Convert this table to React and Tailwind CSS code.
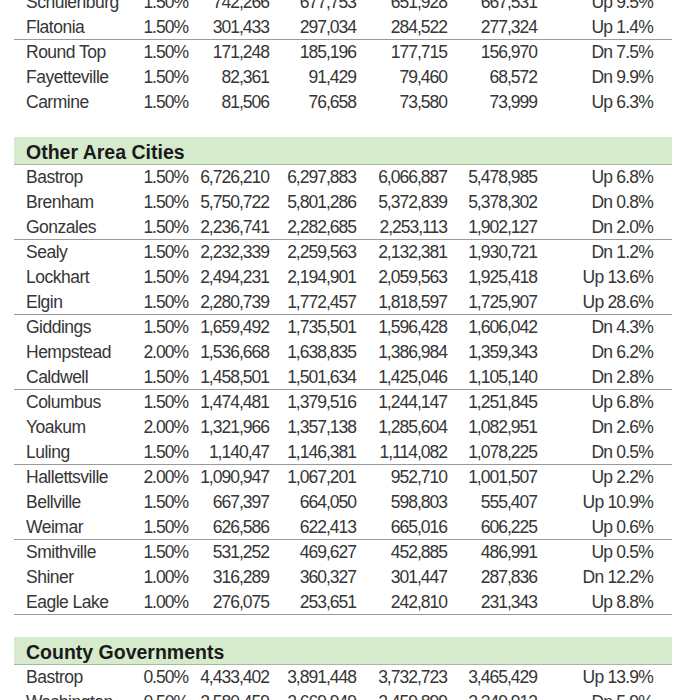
const topRows = [
  ['Schulenburg', '1.50%', '742,266', '677,753', '651,928', '667,531', 'Up 9.5%'],
  ['Flatonia', '1.50%', '301,433', '297,034', '284,522', '277,324', 'Up 1.4%', true],
  ['Round Top', '1.50%', '171,248', '185,196', '177,715', '156,970', 'Dn 7.5%'],
  ['Fayetteville', '1.50%', '82,361', '91,429', '79,460', '68,572', 'Dn 9.9%'],
  ['Carmine', '1.50%', '81,506', '76,658', '73,580', '73,999', 'Up 6.3%'],
];

const areaCities = [
  ['Bastrop', '1.50%', '6,726,210', '6,297,883', '6,066,887', '5,478,985', 'Up 6.8%'],
  ['Brenham', '1.50%', '5,750,722', '5,801,286', '5,372,839', '5,378,302', 'Dn 0.8%'],
  ['Gonzales', '1.50%', '2,236,741', '2,282,685', '2,253,113', '1,902,127', 'Dn 2.0%', true],
  ['Sealy', '1.50%', '2,232,339', '2,259,563', '2,132,381', '1,930,721', 'Dn 1.2%'],
  ['Lockhart', '1.50%', '2,494,231', '2,194,901', '2,059,563', '1,925,418', 'Up 13.6%'],
  ['Elgin', '1.50%', '2,280,739', '1,772,457', '1,818,597', '1,725,907', 'Up 28.6%', true],
  ['Giddings', '1.50%', '1,659,492', '1,735,501', '1,596,428', '1,606,042', 'Dn 4.3%'],
  ['Hempstead', '2.00%', '1,536,668', '1,638,835', '1,386,984', '1,359,343', 'Dn 6.2%'],
  ['Caldwell', '1.50%', '1,458,501', '1,501,634', '1,425,046', '1,105,140', 'Dn 2.8%', true],
  ['Columbus', '1.50%', '1,474,481', '1,379,516', '1,244,147', '1,251,845', 'Up 6.8%'],
  ['Yoakum', '2.00%', '1,321,966', '1,357,138', '1,285,604', '1,082,951', 'Dn 2.6%'],
  ['Luling', '1.50%', '1,140,47', '1,146,381', '1,114,082', '1,078,225', 'Dn 0.5%', true],
  ['Hallettsville', '2.00%', '1,090,947', '1,067,201', '952,710', '1,001,507', 'Up 2.2%'],
  ['Bellville', '1.50%', '667,397', '664,050', '598,803', '555,407', 'Up 10.9%'],
  ['Weimar', '1.50%', '626,586', '622,413', '665,016', '606,225', 'Up 0.6%', true],
  ['Smithville', '1.50%', '531,252', '469,627', '452,885', '486,991', 'Up 0.5%'],
  ['Shiner', '1.00%', '316,289', '360,327', '301,447', '287,836', 'Dn 12.2%'],
  ['Eagle Lake', '1.00%', '276,075', '253,651', '242,810', '231,343', 'Up 8.8%', true],
];

const counties = [
  ['Bastrop', '0.50%', '4,433,402', '3,891,448', '3,732,723', '3,465,429', 'Up 13.9%'],
  ['Washington', '0.50%', '2,580,459', '2,669,949', '2,459,899', '2,349,913', 'Dn 5.9%'],
];

function Row({ row }) {
  const [name, rate, a, b, c, d, change, line] = row;
  return (
    <div
      className={`grid h-[25px] grid-cols-[114px_48px_81px_87px_91px_90px_116px] items-center pr-[19px] pl-3 ${
        line ? 'border-b border-[#9a9a9a]' : ''
      }`}
    >
      <span className="tracking-[-0.5px] whitespace-nowrap">{name}</span>
      <span className="text-right tracking-[-1px] whitespace-nowrap">{rate}</span>
      <span className="text-right tracking-[-1px] whitespace-nowrap">{a}</span>
      <span className="text-right tracking-[-1px] whitespace-nowrap">{b}</span>
      <span className="text-right tracking-[-1px] whitespace-nowrap">{c}</span>
      <span className="text-right tracking-[-1px] whitespace-nowrap">{d}</span>
      <span className="text-right tracking-[-0.8px] whitespace-nowrap">{change}</span>
    </div>
  );
}

function Section({ title, rows }) {
  return (
    <div className="mt-[22px]">
      <div className="flex h-[28px] items-end border-b border-[#a8b8a2] bg-[#d5ebcc] pl-3">
        <span className="text-[19.5px] font-bold leading-[24px] text-[#1a1a1a]">{title}</span>
      </div>
      {rows.map((r, i) => (
        <Row key={i} row={r} />
      ))}
    </div>
  );
}

export default function App() {
  return (
    <div className="h-[700px] overflow-hidden bg-white">
      <div className="mx-[14px] -mt-[10px] w-[658px] font-['Liberation_Sans',Arial,sans-serif] text-[17.5px] leading-[25px] text-[#363636]">
        {topRows.map((r, i) => (
          <Row key={i} row={r} />
        ))}
        <Section title="Other Area Cities" rows={areaCities} />
        <Section title="County Governments" rows={counties} />
      </div>
    </div>
  );
}
